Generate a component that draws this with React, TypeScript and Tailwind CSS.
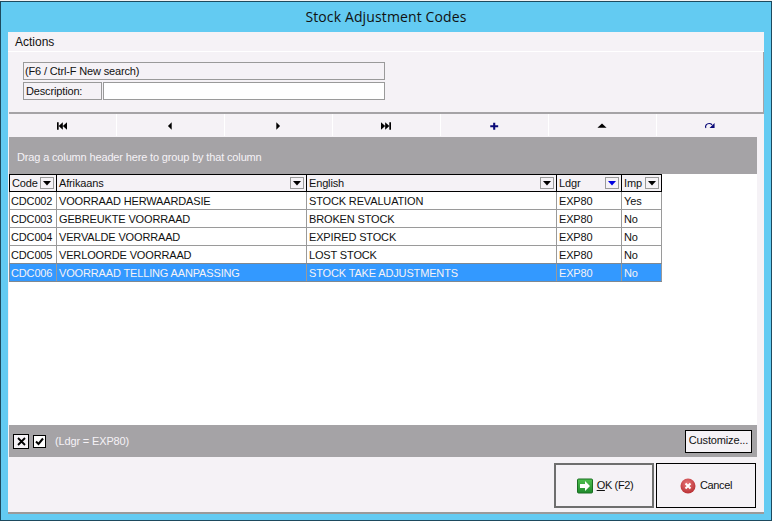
const SANS = { fontFamily: '"Liberation Sans", Arial, sans-serif' };

const COLS = [
  { key: 'code', label: 'Code', width: 'w-[47px]', cell: 'pl-[1px]', head: 'pl-[2px]' },
  { key: 'afr', label: 'Afrikaans', width: 'w-[250px]', cell: 'pl-[2px]', head: 'pl-[2px]' },
  { key: 'eng', label: 'English', width: 'w-[250px]', cell: 'pl-[2px]', head: 'pl-[2px]' },
  { key: 'ldgr', label: 'Ldgr', width: 'w-[65px]', cell: 'pl-[2px]', head: 'pl-[2px]', filtered: true },
  { key: 'imp', label: 'Imp', width: 'w-[40px]', cell: 'pl-[2px]', head: 'pl-[2px]' },
];

const ROWS = [
  { code: 'CDC002', afr: 'VOORRAAD HERWAARDASIE', eng: 'STOCK REVALUATION', ldgr: 'EXP80', imp: 'Yes' },
  { code: 'CDC003', afr: 'GEBREUKTE VOORRAAD', eng: 'BROKEN STOCK', ldgr: 'EXP80', imp: 'No' },
  { code: 'CDC004', afr: 'VERVALDE VOORRAAD', eng: 'EXPIRED STOCK', ldgr: 'EXP80', imp: 'No' },
  { code: 'CDC005', afr: 'VERLOORDE VOORRAAD', eng: 'LOST STOCK', ldgr: 'EXP80', imp: 'No' },
  { code: 'CDC006', afr: 'VOORRAAD TELLING AANPASSING', eng: 'STOCK TAKE ADJUSTMENTS', ldgr: 'EXP80', imp: 'No', selected: true },
];

function NavGlyph({ name }: { name: string }) {
  const dark = '#000';
  const navy = '#0a0a78';
  return (
    <svg width="12" height="10" viewBox="0 0 14 12">
      {name === 'first' && <path fill={dark} d="M1 1.500h2v9H1zM8 1.500v9L3 6zM13 1.500v9L8 6z" />}
      {name === 'prev' && <path fill={dark} d="M9 1.500v9L4.500 6z" />}
      {name === 'next' && <path fill={dark} d="M5 1.500v9L9.500 6z" />}
      {name === 'last' && <path fill={dark} d="M1 1.500v9L6 6zM6 1.500v9L11 6zM11 1.500h2v9h-2z" />}
      {name === 'add' && <path fill={navy} d="M6 2h2.500v3H12v2.500H8.500v3H6v-3H2.500V5H6z" />}
      {name === 'up' && <path fill={dark} d="M7 3l5.500 5h-11z" />}
      {name === 'refresh' && (
        <g>
          <path fill="none" stroke={navy} strokeWidth="1.400" d="M2 8.500C0.800 5.500 3 3 6 3c1.500 0 2.500.5 3.500 1.500" />
          <path fill={navy} d="M12.500 2.500v6h-6z" />
        </g>
      )}
    </svg>
  );
}

function DropButton({ filtered }: { filtered?: boolean }) {
  return (
    <span className="flex h-[12px] w-[14px] items-center justify-center border border-[#9a9a9a] bg-[#f5f2f6]">
      <svg width="8" height="5" viewBox="0 0 8 5">
        <path fill={filtered ? '#0000e0' : '#000'} d="M0 0h8L4 4.500z" />
      </svg>
    </span>
  );
}

function GroupHeader() {
  return (
    <div className="flex h-[18px] w-[653px] border-y border-l border-black bg-[#f5f2f6]">
      {COLS.map(c => (
        <div
          key={c.key}
          className={`${c.width} ${c.head} flex items-center justify-between border-r border-black pr-[2px]`}
        >
          <span>{c.label}</span>
          <DropButton filtered={c.filtered} />
        </div>
      ))}
    </div>
  );
}

export default function App() {
  return (
    <div className="flex h-[521px] w-[772px] flex-col overflow-hidden bg-[#63cbf2] text-[11px] leading-none tracking-[-0.15px] text-[#111]" style={SANS}>
      <div className="h-px shrink-0 bg-[#f1f1f1]" />
      <div className="flex h-[520px] flex-col border-x border-y border-[#1d4a5e]">
        <div
          className="flex h-[30px] shrink-0 items-center justify-center pb-px text-[14px] tracking-[0.13px]"
          style={{ fontFamily: '"Open Sans", sans-serif' }}
        >
          Stock Adjustment Codes
        </div>

        <div className="mx-[7px] flex h-[482px] shrink-0 flex-col border-b-2 border-[#9a9a9a] bg-[#f5f2f6]">
          {/* Actions menu */}
          <div className="flex h-[20px] shrink-0 items-center border-b border-white pl-[7px] text-[12px] tracking-normal">Actions</div>

          {/* Search panel */}
          <div className="flex h-[60px] shrink-0 flex-col gap-[2px] border-r border-[#a5a3a6] pl-[15px] pt-[10px]">
            <div className="flex h-[18px] w-[362px] items-center border border-[#9a9a9a] pl-[1px]">(F6 / Ctrl-F New search)</div>
            <div className="flex h-[18px] w-[362px] gap-px">
              <div className="flex w-[79px] items-center border border-[#9a9a9a] pl-[2px]">Description:</div>
              <div className="flex-1 border border-[#9a9a9a] bg-white" />
            </div>
          </div>

          {/* Navigator */}
          <div className="ml-px flex h-[24px] shrink-0 border-t-2 border-[#a5a3a6]">
            {['first', 'prev', 'next', 'last', 'add', 'up', 'refresh'].map((n, i) => (
              <div
                key={n}
                className={`flex h-[22px] items-center justify-center pr-px pt-px ${i < 6 ? 'w-[108px] border-r border-white' : 'flex-1'}`}
              >
                <NavGlyph name={n} />
              </div>
            ))}
          </div>

          {/* Grid */}
          <div className="ml-px mt-px flex w-[748px] flex-1 flex-col">
            <div className="flex h-[37px] shrink-0 items-center bg-[#a5a3a6] pl-[8px] pt-[3px] text-[#f5f2f6]">
              Drag a column header here to group by that column
            </div>
            <div className="flex-1 bg-white">
              <GroupHeader />
              {ROWS.map(r => (
                <div
                  key={r.code}
                  className={`flex w-[653px] border-l border-[#9a9a9a] ${
                    r.selected
                      ? '-mt-px h-[19px] border-y border-[#808890] bg-[#3399ff] text-[#f5f2f6]'
                      : 'h-[18px] border-b'
                  }`}
                >
                  {COLS.map(c => (
                    <div key={c.key} className={`${c.width} ${c.cell} flex items-center whitespace-nowrap border-r border-[#9a9a9a] pt-[2px]`}>
                      {r[c.key as 'code']}
                    </div>
                  ))}
                </div>
              ))}
            </div>
            <div className="flex h-[32px] shrink-0 items-center bg-[#a5a3a6] pl-[4px] pr-[5px] text-[#f5f2f6]">
              <span className="flex h-[15px] w-[16px] items-center justify-center border border-black bg-[#f5f2f6]">
                <svg width="9" height="9" viewBox="0 0 9 9"><path stroke="#000" strokeWidth="1.800" d="M1 1l7 7M8 1L1 8" /></svg>
              </span>
              <span className="ml-[4px] flex h-[13px] w-[13px] items-center justify-center border border-black bg-white">
                <svg width="9" height="9" viewBox="0 0 9 9"><path fill="none" stroke="#000" strokeWidth="2" d="M1 4.500l2.500 2.500L8 1.500" /></svg>
              </span>
              <span className="ml-[9px]">(Ldgr = EXP80)</span>
              <button className="ml-auto h-[23px] w-[67px] border border-black bg-[#f5f2f6] pb-[2px] text-[#111]">Customize...</button>
            </div>
          </div>

          {/* Dialog buttons */}
          <div className="flex h-[55px] shrink-0 justify-end gap-[2px] pr-[8px] pt-[6px] tracking-[-0.35px]">
            <button className="flex h-[45px] w-[100px] items-center justify-center gap-[4px] border-2 border-[#6e6e6e] pl-[2px]">
              <svg width="16" height="16" viewBox="0 0 16 16">
                <defs>
                  <linearGradient id="okFill" x1="0" y1="0" x2="0" y2="1">
                    <stop offset="0" stopColor="#4fc04f" />
                    <stop offset="1" stopColor="#1f8a2c" />
                  </linearGradient>
                </defs>
                <rect x="0.500" y="1" width="15" height="14" rx="1" fill="url(#okFill)" stroke="#1b6e23" />
                <path fill="#fff" d="M8 3l5 5-5 5v-3H3V6h5z" />
              </svg>
              <span><span className="underline">O</span>K (F2)</span>
            </button>
            <button className="flex h-[45px] w-[100px] items-center justify-center gap-[4px] border border-black">
              <svg width="16" height="16" viewBox="0 0 16 16">
                <defs>
                  <radialGradient id="cancelFill" cx="0.450" cy="0.350" r="0.700">
                    <stop offset="0" stopColor="#e8787a" />
                    <stop offset="1" stopColor="#b52a2e" />
                  </radialGradient>
                </defs>
                <circle cx="8" cy="8" r="7.500" fill="url(#cancelFill)" />
                <path stroke="#fff" strokeWidth="2" d="M5.500 5.500l5 5M10.500 5.500l-5 5" />
              </svg>
              <span>Cancel</span>
            </button>
          </div>
        </div>
      </div>
    </div>
  );
}
